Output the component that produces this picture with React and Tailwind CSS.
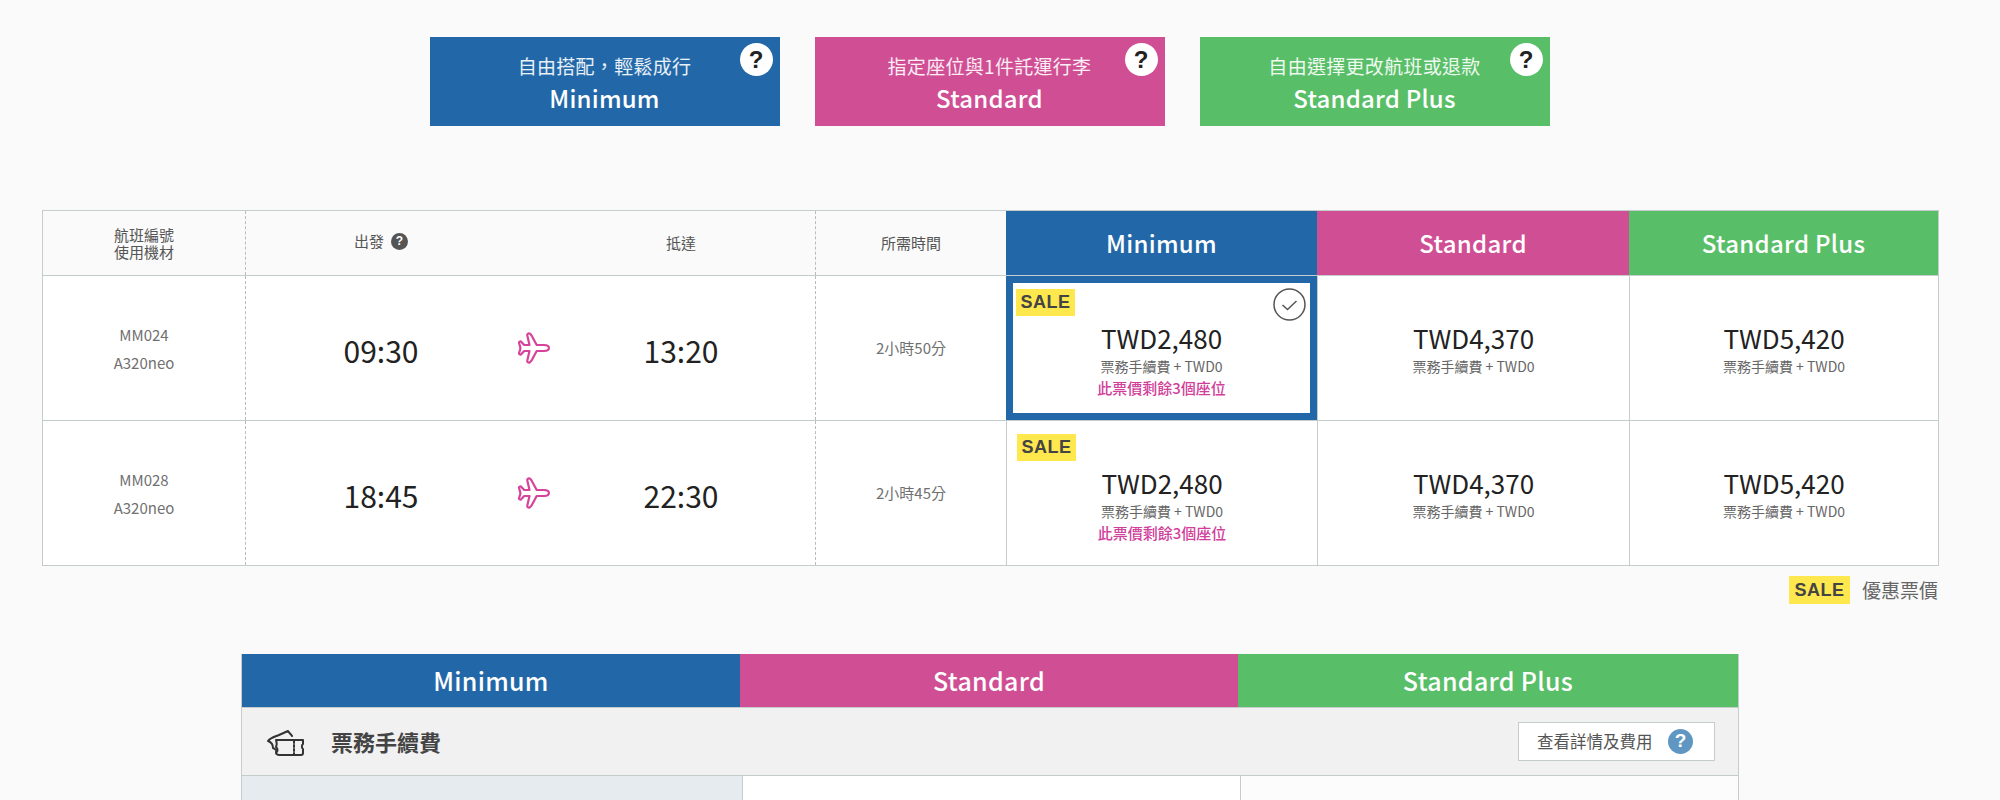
import React from "react";

const FONT = { fontFamily: '"Noto Sans CJK TC", "Noto Sans", sans-serif' };

const plans = [
	{ name: "Minimum", bg: "bg-[#2268a8]", tip: "自由搭配，輕鬆成行" },
	{ name: "Standard", bg: "bg-[#d04e94]", tip: "指定座位與1件託運行李" },
	{ name: "Standard Plus", bg: "bg-[#58be67]", tip: "自由選擇更改航班或退款" },
];

const flights = [
	{ no: "MM024", dep: "09:30", arr: "13:20", time: "2小時50分", selected: true },
	{ no: "MM028", dep: "18:45", arr: "22:30", time: "2小時45分" },
];

function PlaneIcon() {
	return (
		<svg width="34" height="34" viewBox="0 0 34 34" fill="none" stroke="#d6439a" strokeWidth="2.2" strokeLinejoin="round">
			<path d="M2 11.5c0-1 1.6-1.4 2.4-.6l2.8 3.1h5.3L10.3 4.6c-.4-1.6 1-2.6 2.3-2 1 .5 1.6 1.3 2.1 2.2l5 9.2h7.300c3 0 4.900 1.300 4.900 3s-1.900 3-4.900 3h-7.300l-5 9.200c-.5.9-1.100 1.700-2.100 2.200-1.300.6-2.700-.4-2.300-2l2.200-9.400H7.200l-2.800 3.100c-.8.8-2.400.4-2.400-.6 0-1.200 1.400-3.500 1.400-5.300S2 12.700 2 11.500z" />
		</svg>
	);
}

function HelpDot({ className, size }) {
	return (
		<span className={`flex items-center justify-center rounded-full font-bold ${className}`} style={{ fontFamily: '"Liberation Sans", sans-serif' }}>
			<span className={size}>?</span>
		</span>
	);
}

function TicketIcon() {
	return (
		<svg width="38" height="30" viewBox="0 0 38 30" fill="none" stroke="#333" strokeWidth="2" strokeLinejoin="round" strokeLinecap="round">
			<path d="M9 25c1-2-1-3-3-4 0-3-2-6-5-7 2-3 6-4 11-6l9-4c1 2 3 3 4 5" />
			<path d="M9 13h27v4c-1.500 1-1.500 4 0 5v4a2 2 0 0 1-2 2H12c-1 0-3-1-3-2 2-2 2-4 0-6 1-2 1-4 0-7z" />
			<path d="M27 14v13" strokeDasharray="2 2" />
		</svg>
	);
}

function Sale({ className }) {
	return (
		<span
			className={`flex h-[27px] items-center justify-center bg-[#ffe84d] text-[18px] font-bold tracking-[0.5px] text-[#444] ${className}`}
			style={{ fontFamily: '"Liberation Sans", sans-serif' }}
		>
			SALE
		</span>
	);
}

function PriceCell({ price, sale, selected }) {
	return (
		<div className={`relative flex h-full flex-col items-center bg-white ${selected ? "border-[7px] border-[#2268a8]" : "border-l border-[#c4cccc]"}`}>
			<div className={`flex w-full flex-col items-center ${selected ? "pt-[36px]" : "pt-[43px]"}`}>
				<div className="text-[26px] leading-[38px] text-[#222]">{price}</div>
				<div className="-mt-[1px] text-[14px] leading-[20px] text-[#666]">票務手續費 + TWD0</div>
				{sale && <div className="mt-[1px] text-[15px] leading-[21px] font-medium text-[#d0409a]">此票價剩餘3個座位</div>}
			</div>
			{sale && <Sale className={`absolute w-[59px] ${selected ? "top-[6px] left-[3px]" : "top-[13px] left-[10px]"}`} />}
			{selected && (
				<svg className="absolute top-[5px] right-[4px]" width="33" height="33" viewBox="0 0 33 33" fill="none" stroke="#555" strokeWidth="1.500">
					<circle cx="16.500" cy="16.500" r="15.500" />
					<path d="M9.500 17l5 4.500 9-8.500" />
				</svg>
			)}
		</div>
	);
}

export default function App() {
	return (
		<div className="h-[800px] overflow-hidden bg-[#fafafa]" style={FONT}>
			<div className="flex justify-center gap-[35px] pt-[37px] pr-[21px]">
				{plans.map((p) => (
					<div key={p.name} className={`relative flex h-[89px] w-[350px] flex-col items-center pt-[15px] text-white ${p.bg}`}>
						<div className="text-[19px] leading-[28px] tracking-[0.3px] text-white/90">{p.tip}</div>
						<div className="text-[24px] leading-[35px] font-medium tracking-[0.2px]">{p.name}</div>
						<HelpDot className="absolute top-[6px] right-[7px] h-[33px] w-[33px] bg-white text-[#222]" size="text-[24px]" />
					</div>
				))}
			</div>

			<div className="mt-[84px] ml-[42px] w-[1897px] border border-[#c4cccc]">
				<div className="grid h-[64px] grid-cols-[202px_571px_190px_311px_312px_1fr] text-[15px] text-[#555]">
					<div className="flex flex-col items-center justify-center bg-[#fafafa] leading-[17px]">
						<span>航班編號</span>
						<span>使用機材</span>
					</div>
					<div className="grid grid-cols-[270px_35px_260px_1fr] items-center border-x border-dashed border-[#bbb]">
						<div className="flex items-center justify-center gap-[7px] pb-[4px]">
							<span>出發</span>
							<HelpDot className="h-[17px] w-[17px] bg-[#555] text-white" size="text-[12px]" />
						</div>
						<div />
						<div className="text-center">抵達</div>
					</div>
					<div className="flex items-center justify-center">所需時間</div>
					{plans.map((p) => (
						<div key={p.name} className={`flex items-center justify-center text-[24px] font-medium tracking-[0.3px] text-white ${p.bg}`}>
							{p.name}
						</div>
					))}
				</div>
				{flights.map((f) => (
					<div key={f.no} className="grid h-[145px] grid-cols-[202px_571px_190px_311px_312px_1fr] border-t border-[#c4cccc] bg-white">
						<div className="flex flex-col items-center justify-center gap-[7px] text-[15px] leading-[21px] text-[#707070]">
							<span>{f.no}</span>
							<span>A320neo</span>
						</div>
						<div className="grid grid-cols-[270px_35px_260px_1fr] items-center border-x border-dashed border-[#bbb] text-[30px] text-[#222]">
							<div className="pt-[4px] text-center">{f.dep}</div>
							<div className="flex justify-center">
								<PlaneIcon />
							</div>
							<div className="pt-[4px] text-center">{f.arr}</div>
						</div>
						<div className="flex items-center justify-center text-[15px] text-[#707070]">{f.time}</div>
						<PriceCell price="TWD2,480" sale selected={f.selected} />
						<PriceCell price="TWD4,370" />
						<PriceCell price="TWD5,420" />
					</div>
				))}
			</div>

			<div className="mt-[10px] mr-[62px] flex items-center justify-end gap-[12px]">
				<Sale className="h-[28px] w-[61px]" />
				<span className="text-[19px] leading-[28px] text-[#666]">優惠票價</span>
			</div>

			<div className="mt-[50px] ml-[241px] w-[1498px] border-x border-[#c4cccc]">
				<div className="grid h-[53px] grid-cols-[498px_498px_1fr] text-[25px] font-medium tracking-[0.3px] text-white">
					{plans.map((p) => (
						<div key={p.name} className={`flex items-center justify-center ${p.bg}`}>
							{p.name}
						</div>
					))}
				</div>
				<div className="flex h-[69px] items-center justify-between border-y border-[#c4cccc] bg-[#f1f1f1] pr-[23px] pl-[25px]">
					<div className="flex items-center gap-[26px] text-[22px] font-bold text-[#444]">
						<TicketIcon />
						<span>票務手續費</span>
					</div>
					<div className="flex h-[39px] w-[197px] items-center justify-between border border-[#c4cccc] bg-white pr-[21px] pl-[18px] text-[16.500px] text-[#555]">
						<span>查看詳情及費用</span>
						<HelpDot className="h-[25px] w-[25px] bg-[#5f97c2] text-white" size="text-[19px]" />
					</div>
				</div>
				<div className="grid h-[30px] grid-cols-[500px_498px_1fr]">
					<div className="bg-[#e6ebef]" />
					<div className="border-l border-[#c4cccc] bg-white" />
					<div className="border-l border-[#c4cccc] bg-[#fcfcfc]" />
				</div>
			</div>
		</div>
	);
}
